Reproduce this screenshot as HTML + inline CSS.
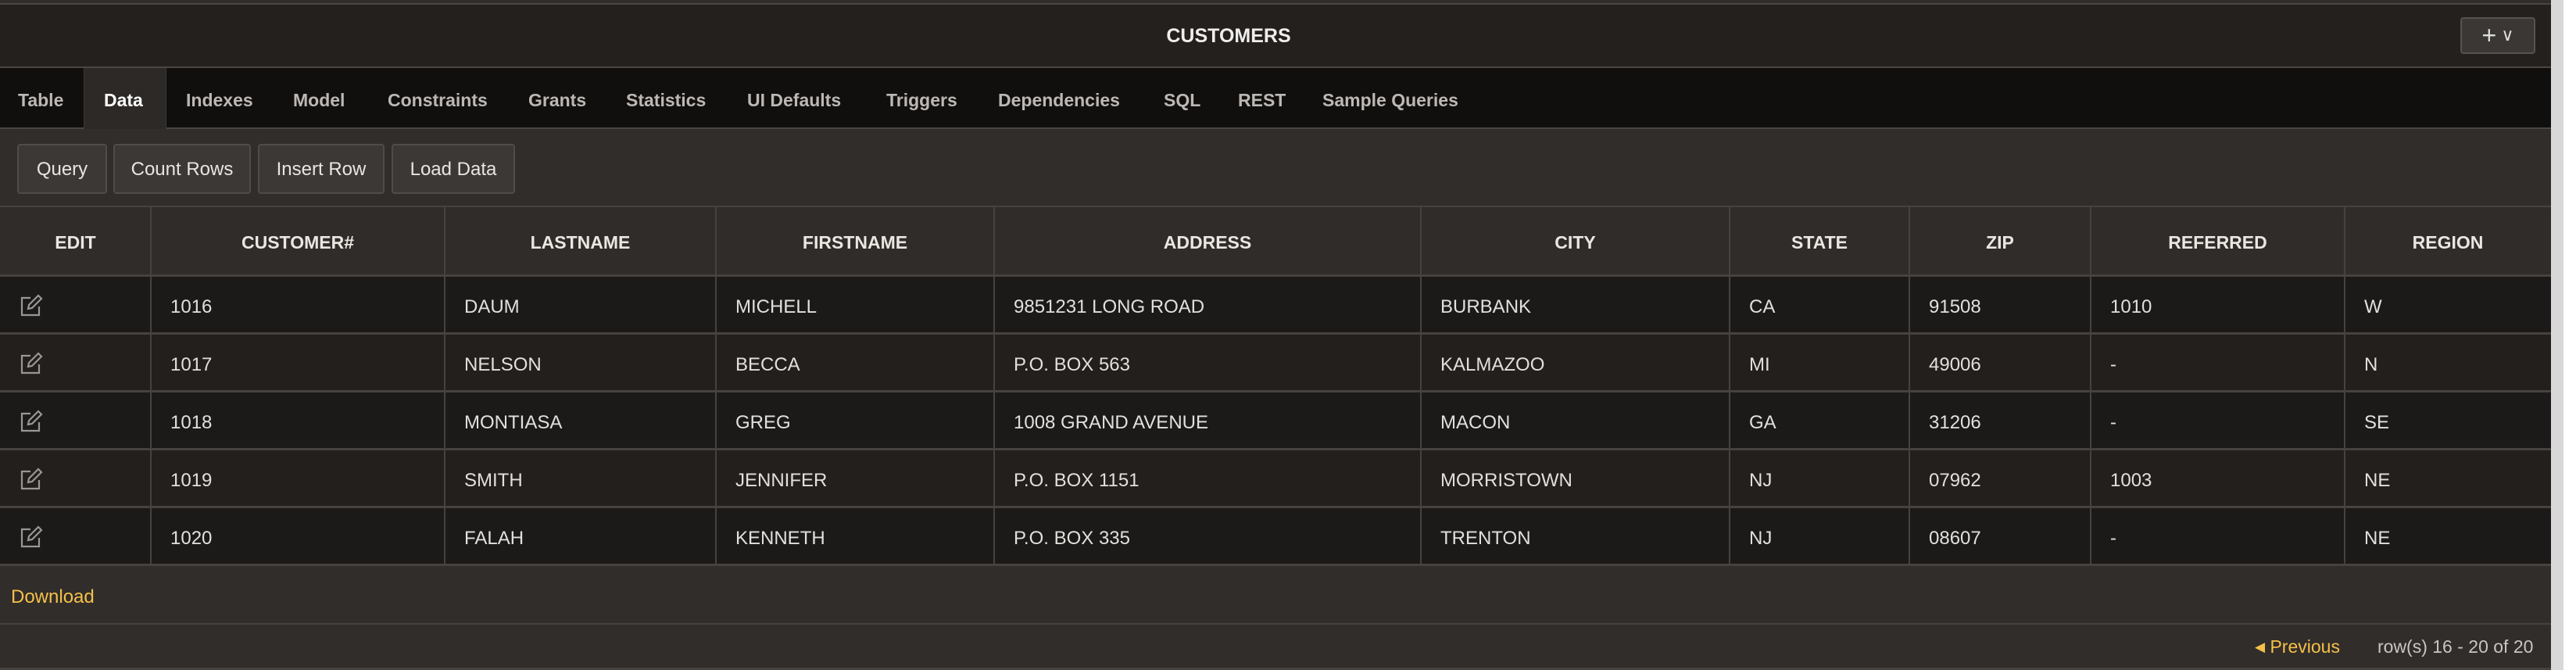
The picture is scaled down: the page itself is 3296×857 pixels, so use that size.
<!DOCTYPE html>
<html><head><meta charset="utf-8"><style>
*{margin:0;padding:0;box-sizing:border-box}
body{width:3296px;height:857px;background:#fff;font-family:"Liberation Sans",sans-serif;position:relative;overflow:hidden}
.a{position:absolute}
#main{left:0;top:0;width:3264px;height:857px;background:#312d2a}
#title{left:0;top:4px;width:3264px;height:83px;background:#23201e;border-top:2px solid #4a4643;border-bottom:2px solid #4a4643}
#title span{position:absolute;left:0;right:0;top:26px;text-align:center;color:#f0eeec;font-weight:bold;font-size:25px;padding-right:120px}
#plus{left:3148px;top:22px;width:96px;height:47px;background:#3b3734;border:2px solid #57524e;border-radius:4px;color:#ddd;font-size:32px;line-height:42px;text-align:center}
#tabs{left:0;top:87px;width:3264px;height:78px;background:#100f0e;border-bottom:2px solid #4a4643}
.tab{position:absolute;top:24px;color:#bdb8b4;font-weight:bold;font-size:23px}
#datatab{left:107px;top:87px;width:106px;height:78px;background:#2c2926;border-left:1px solid #3b3835;border-right:1px solid #3b3835}
.btn{position:absolute;top:184px;height:64px;background:#3c3835;border:2px solid #514c48;border-radius:4px;color:#e8e5e2;font-size:24px;line-height:62px;text-align:center}
.hdr{position:absolute;top:263px;height:91px;background:#302c29;border-top:2px solid #46423f;border-bottom:3px solid #46423f}
.hc{position:absolute;top:265px;height:91px;line-height:91px;text-align:center;color:#eae6e2;font-weight:bold;font-size:23px}
.row{position:absolute;left:0;width:3264px;height:74px;border-bottom:3px solid #46423f}
.vl{position:absolute;top:263px;width:2px;height:460px;background:#46423f}
.c{position:absolute;color:#e2dfdc;font-size:24px}
svg.ed{position:absolute}
</style></head><body>
<div class="a" id="main"></div>
<div class="a" style="left:3264px;top:0;width:16px;height:857px;background:#d8d8d8"></div>
<div class="a" id="title"><span>CUSTOMERS</span></div>
<div class="a" id="plus">+<span style="font-size:22px;vertical-align:4px"> ∨</span></div>
<div class="a" id="tabs"></div>
<div class="a" id="datatab"></div>
<div class="tab" style="left:23px;top:115px">Table</div>
<div class="tab" style="left:133px;top:115px;color:#fff">Data</div>
<div class="tab" style="left:238px;top:115px">Indexes</div>
<div class="tab" style="left:375px;top:115px">Model</div>
<div class="tab" style="left:496px;top:115px">Constraints</div>
<div class="tab" style="left:676px;top:115px">Grants</div>
<div class="tab" style="left:801px;top:115px">Statistics</div>
<div class="tab" style="left:956px;top:115px">UI Defaults</div>
<div class="tab" style="left:1134px;top:115px">Triggers</div>
<div class="tab" style="left:1277px;top:115px">Dependencies</div>
<div class="tab" style="left:1489px;top:115px">SQL</div>
<div class="tab" style="left:1584px;top:115px">REST</div>
<div class="tab" style="left:1692px;top:115px">Sample Queries</div>
<div class="btn" style="left:22px;width:115px">Query</div>
<div class="btn" style="left:145px;width:176px">Count Rows</div>
<div class="btn" style="left:330px;width:162px">Insert Row</div>
<div class="btn" style="left:501px;width:158px">Load Data</div>
<div class="hdr" style="left:0;width:3264px"></div>
<div class="row" style="top:354px;background:#1c1a19"></div>
<div class="row" style="top:428px;background:#221f1d"></div>
<div class="row" style="top:502px;background:#1c1a19"></div>
<div class="row" style="top:576px;background:#221f1d"></div>
<div class="row" style="top:650px;background:#1c1a19"></div>
<div class="vl" style="left:192px"></div><div class="vl" style="left:568px"></div><div class="vl" style="left:915px"></div><div class="vl" style="left:1271px"></div><div class="vl" style="left:1817px"></div><div class="vl" style="left:2212px"></div><div class="vl" style="left:2442px"></div><div class="vl" style="left:2674px"></div><div class="vl" style="left:2999px"></div>
<div class="hc" style="left:0;width:193px">EDIT</div>
<div class="hc" style="left:193px;width:376px">CUSTOMER#</div>
<div class="hc" style="left:569px;width:347px">LASTNAME</div>
<div class="hc" style="left:916px;width:356px">FIRSTNAME</div>
<div class="hc" style="left:1272px;width:546px">ADDRESS</div>
<div class="hc" style="left:1818px;width:395px">CITY</div>
<div class="hc" style="left:2213px;width:230px">STATE</div>
<div class="hc" style="left:2443px;width:232px">ZIP</div>
<div class="hc" style="left:2675px;width:325px">REFERRED</div>
<div class="hc" style="left:3000px;width:264px">REGION</div>
<div id="cells"></div>
<script>
var d=[["1016","DAUM","MICHELL","9851231 LONG ROAD","BURBANK","CA","91508","1010","W"],
["1017","NELSON","BECCA","P.O. BOX 563","KALMAZOO","MI","49006","-","N"],
["1018","MONTIASA","GREG","1008 GRAND AVENUE","MACON","GA","31206","-","SE"],
["1019","SMITH","JENNIFER","P.O. BOX 1151","MORRISTOWN","NJ","07962","1003","NE"],
["1020","FALAH","KENNETH","P.O. BOX 335","TRENTON","NJ","08607","-","NE"]];
var xs=[218,594,941,1297,1843,2238,2468,2700,3025],h="";
for(var i=0;i<5;i++){var y=354+i*74;
h+='<svg class="ed" style="left:25px;top:'+(y+22)+'px" width="30" height="30" viewBox="0 0 30 30" fill="none" stroke="#9a9692" stroke-width="2.2"><path d="M14 5H3v22h22V16"/><path d="M11 19l1-5L24 2l4 4-12 12z"/></svg>';
for(var j=0;j<9;j++)h+='<div class="c" style="left:'+xs[j]+'px;top:'+(y+25)+'px">'+d[i][j]+'</div>';}
document.getElementById("cells").innerHTML=h;
</script>
<div class="a" style="left:0;top:797px;width:3264px;height:2px;background:#46423f"></div>
<div class="a" style="left:0;top:854px;width:3264px;height:3px;background:#46423f"></div>
<div class="c" style="left:14px;top:750px;color:#f5c04a">Download</div>
<div class="c" style="left:2885px;top:814px;color:#f5c04a;font-size:23px"><span style="font-size:17px;vertical-align:2px">◀</span> Previous</div>
<div class="c" style="left:3042px;top:814px;color:#c9c5c1;font-size:23px">row(s) 16 - 20 of 20</div>
</body></html>
